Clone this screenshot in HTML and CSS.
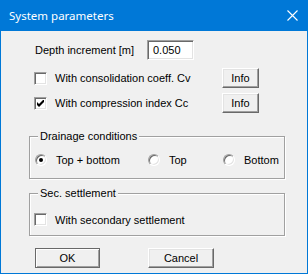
FILE: index.html
```html
<!DOCTYPE html>
<html lang="en">
<head>
  <meta charset="UTF-8">
  <title>System parameters</title>
  <link rel="stylesheet" href="styles.css">
</head>
<body>
  <div class="window">
    <div class="titlebar">
      <span class="title">System parameters</span>
      <svg class="close" width="11" height="11" viewBox="0 0 11 11">
        <path d="M0.5 0.5 L10.5 10.5 M10.5 0.5 L0.5 10.5" stroke="#fff" stroke-width="1.1" fill="none"/>
      </svg>
    </div>

    <div class="content">
      <div class="row depth-row">
        <span class="depth-label">Depth increment [m]</span>
        <div class="field">0.050</div>
      </div>

      <div class="row option-row cv-row">
        <span class="check"></span>
        <span class="option-text">With consolidation coeff. Cv</span>
        <button class="btn info">Info</button>
      </div>

      <div class="row option-row cc-row">
        <span class="check">
          <svg width="7" height="7" viewBox="0 0 7 7"><polygon points="0,2 2,4 7,-1 7,2 2,7 0,5" fill="#000"/></svg>
        </span>
        <span class="option-text">With compression index Cc</span>
        <button class="btn info">Info</button>
      </div>

      <div class="group drainage">
        <div class="group-title">Drainage conditions</div>
        <div class="radios">
          <div class="radio-item item-both"><span class="radio on"></span>Top + bottom</div>
          <div class="radio-item item-top"><span class="radio"></span>Top</div>
          <div class="radio-item item-bottom"><span class="radio"></span>Bottom</div>
        </div>
      </div>

      <div class="group secondary">
        <div class="group-title">Sec. settlement</div>
        <div class="sec-row">
          <span class="check"></span>
          <span class="option-text">With secondary settlement</span>
        </div>
      </div>

      <div class="buttons">
        <button class="btn ok">OK</button>
        <button class="btn cancel">Cancel</button>
      </div>
    </div>
  </div>
</body>
</html>
```

FILE: styles.css
```css
body {
  margin: 0;
  padding: 0;
  font-family: "Liberation Sans", Arial, sans-serif;
  font-size: 11px;
  color: #000;
  background-color: #f0f0f0;
}

.window {
  width: 308px;
  height: 274px;
  box-sizing: border-box;
  border: 1px solid #0078d7;
  border-top: none;
  background-color: #f0f0f0;
}

.titlebar {
  height: 31px;
  margin: 0 -1px;
  background-color: #0078d7;
  display: flex;
  align-items: center;
  justify-content: space-between;
  padding: 0 10px 0 9px;
}

.title {
  font-family: "Noto Sans", "Open Sans", sans-serif;
  font-size: 11.5px;
  color: #fff;
  margin-top: -1px;
}

.close {
  display: block;
  margin-top: 0;
}

.content {
  padding: 9px 0 0 33px;
}

.row {
  display: flex;
  align-items: center;
  height: 20px;
  width: 225px;
}

.depth-label {
  width: 113px;
  padding-left: 1px;
  box-sizing: border-box;
}

.field {
  width: 47px;
  height: 20px;
  box-sizing: border-box;
  border: 1px solid;
  border-color: #a0a0a0 #fff #fff #a0a0a0;
  box-shadow: inset 1px 1px 0 #696969, inset -1px -1px 0 #e3e3e3;
  background-color: #fff;
  padding: 1px 0 0 5px;
  line-height: 17px;
}

.cv-row {
  margin-top: 8px;
}

.cc-row {
  margin-top: 5px;
}

.check {
  width: 13px;
  height: 13px;
  box-sizing: border-box;
  border: 1px solid;
  border-color: #a0a0a0 #fff #fff #a0a0a0;
  box-shadow: inset 1px 1px 0 #696969, inset -1px -1px 0 #e3e3e3;
  background-color: #fff;
  flex-shrink: 0;
  display: flex;
  align-items: center;
  justify-content: center;
}

.check svg {
  display: block;
}

.option-text {
  margin-left: 8px;
  flex: 1;
}

.btn {
  font-family: "Liberation Sans", Arial, sans-serif;
  font-size: 11px;
  color: #000;
  background-color: #f0f0f0;
  height: 20px;
  padding: 0;
  border: 1px solid;
  border-color: #fff #696969 #696969 #fff;
  box-shadow: inset -1px -1px 0 #a0a0a0, inset 1px 1px 0 #e3e3e3;
  cursor: pointer;
}

.info {
  width: 37px;
}

.group {
  margin-left: -5px;
  width: 256px;
  box-sizing: border-box;
  border: 1px solid #a0a0a0;
  box-shadow: inset 1px 1px 0 #fff, 1px 1px 0 #fff;
}

.group-title {
  display: inline-block;
  margin: -7px 0 0 8px;
  padding: 0 2px;
  line-height: 13px;
  background-color: #f0f0f0;
  vertical-align: top;
}

.drainage {
  margin-top: 23px;
  padding-bottom: 12px;
}

.radios {
  display: flex;
  align-items: center;
  height: 12px;
  margin-top: 5px;
  padding-left: 5px;
}

.radio-item {
  display: flex;
  align-items: center;
}

.item-both {
  width: 113px;
}

.item-top {
  width: 75px;
}

.radio {
  position: relative;
  width: 12px;
  height: 12px;
  box-sizing: border-box;
  border-radius: 50%;
  border: 1px solid;
  border-color: #a0a0a0 #fff #fff #a0a0a0;
  box-shadow: inset 1px 1px 0 #696969, inset -1px -1px 0 #e3e3e3;
  background-color: #fff;
  margin-right: 9px;
}

.radio.on::after {
  content: "";
  position: absolute;
  left: 3px;
  top: 3px;
  width: 4px;
  height: 4px;
  border-radius: 50%;
  background-color: #000;
}

.secondary {
  margin-top: 14px;
  padding-bottom: 9px;
}

.sec-row {
  display: flex;
  align-items: center;
  height: 13px;
  margin-top: 7px;
  padding-left: 4px;
}

.buttons {
  display: flex;
  gap: 48px;
  margin-top: 12px;
  padding-left: 1px;
}

.ok {
  width: 65px;
  border-color: #696969;
  box-shadow: inset 1px 1px 0 #fff, inset -1px -1px 0 #a0a0a0;
}

.cancel {
  width: 66px;
}
```
